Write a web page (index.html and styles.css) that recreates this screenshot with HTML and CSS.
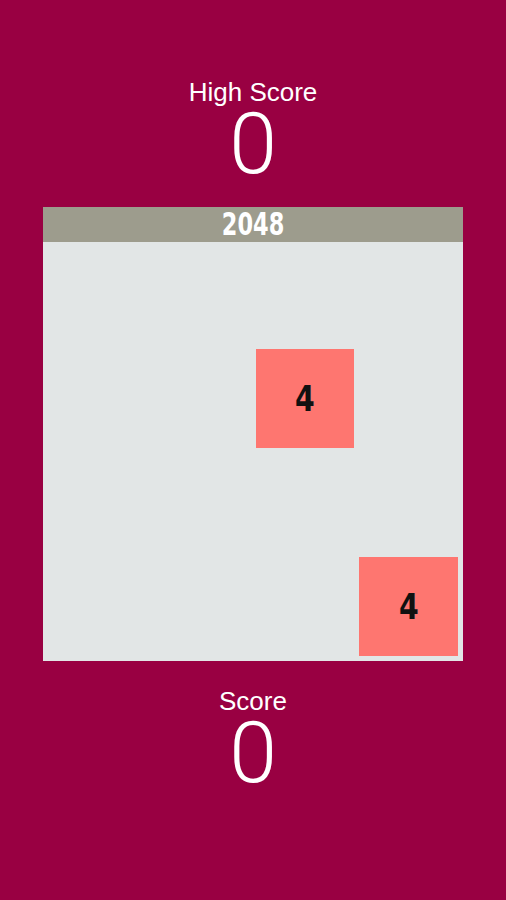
FILE: index.html
```html
<!DOCTYPE html>
<html lang="en">
<head>
    <meta charset="UTF-8">
    <meta name="viewport" content="width=device-width, initial-scale=1.0">
    <title>2048</title>
    <link rel="stylesheet" href="styles.css">
</head>
<body>
    <div class="game">
        <div class="score-box score-high">
            <div class="score-label">High Score</div>
            <div class="score-value" id="high-score">0</div>
        </div>

        <div class="board">
            <div class="board-title"><span class="narrow">2048</span></div>
            <div class="grid">
                <div class="cell"></div>
                <div class="cell"></div>
                <div class="cell"></div>
                <div class="cell"></div>

                <div class="cell"></div>
                <div class="cell"></div>
                <div class="cell tile tile-4"><span class="narrow">4</span></div>
                <div class="cell"></div>

                <div class="cell"></div>
                <div class="cell"></div>
                <div class="cell"></div>
                <div class="cell"></div>

                <div class="cell"></div>
                <div class="cell"></div>
                <div class="cell"></div>
                <div class="cell tile tile-4"><span class="narrow">4</span></div>
            </div>
        </div>

        <div class="score-box score-current">
            <div class="score-label">Score</div>
            <div class="score-value" id="score">0</div>
        </div>
    </div>
</body>
</html>
```

FILE: styles.css
```css
* {
    margin: 0;
    padding: 0;
    box-sizing: border-box;
}

body {
    font-family: 'Liberation Sans', Arial, sans-serif;
    background: #990042;
    min-height: 100vh;
}

.game {
    display: flex;
    flex-direction: column;
    align-items: center;
}

.score-box {
    display: flex;
    flex-direction: column;
    align-items: center;
    color: #fff;
}

.score-high {
    padding-top: 79px;
}

.score-current {
    padding-top: 27px;
}

.score-label {
    font-size: 26px;
    line-height: 26px;
}

.score-value {
    font-family: Roboto, 'Liberation Sans', sans-serif;
    font-weight: 300;
    font-size: 86px;
    line-height: 78px;
}

.board {
    width: 420px;
    margin-top: 24px;
    background: #e2e6e6;
}

.board-title {
    height: 35px;
    background: #9d9c8d;
    color: #fff;
    text-align: center;
    font-family: 'DejaVu Sans Condensed', 'DejaVu Sans', sans-serif;
    font-stretch: condensed;
    font-weight: bold;
    font-size: 32px;
    line-height: 35px;
}

/* condensed digits, squeezed a bit further */
.narrow {
    display: inline-block;
    transform: scaleX(0.78);
}

.grid {
    display: grid;
    grid-template-columns: repeat(4, 1fr);
    grid-template-rows: repeat(4, 99px);
    gap: 5px;
    padding: 3px 5px 5px 5px;
}

.tile {
    display: flex;
    justify-content: center;
    align-items: center;
    font-family: 'DejaVu Sans Condensed', 'DejaVu Sans', sans-serif;
    font-stretch: condensed;
    font-weight: bold;
    font-size: 35px;
    color: #111;
}

.tile .narrow {
    transform: scaleX(0.9);
}

.tile-4 {
    background: #fe7670;
}
```
